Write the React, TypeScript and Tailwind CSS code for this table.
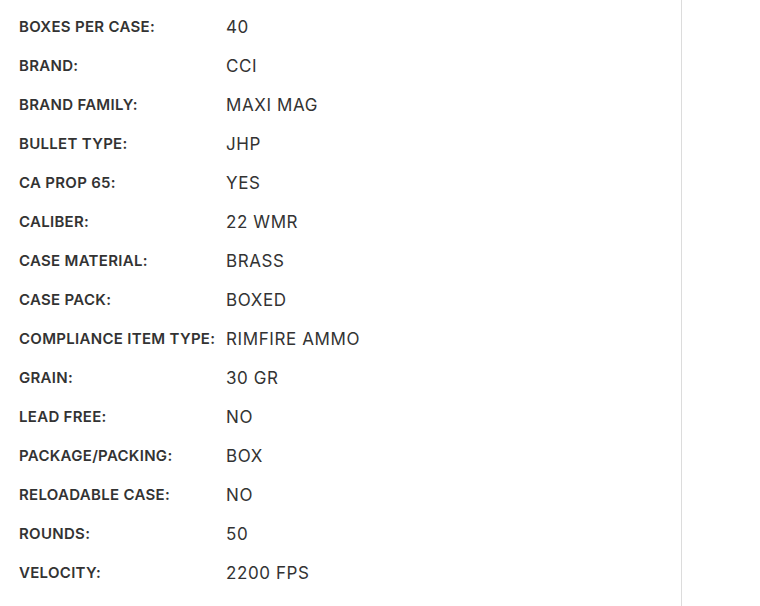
const rows: [string, string][] = [
  ["BOXES PER CASE:", "40"],
  ["BRAND:", "CCI"],
  ["BRAND FAMILY:", "MAXI MAG"],
  ["BULLET TYPE:", "JHP"],
  ["CA PROP 65:", "YES"],
  ["CALIBER:", "22 WMR"],
  ["CASE MATERIAL:", "BRASS"],
  ["CASE PACK:", "BOXED"],
  ["COMPLIANCE ITEM TYPE:", "RIMFIRE AMMO"],
  ["GRAIN:", "30 GR"],
  ["LEAD FREE:", "NO"],
  ["PACKAGE/PACKING:", "BOX"],
  ["RELOADABLE CASE:", "NO"],
  ["ROUNDS:", "50"],
  ["VELOCITY:", "2200 FPS"],
];

export default function App() {
  return (
    <div className="flex h-[606px] w-[760px] bg-white" style={{ fontFamily: "Inter, 'Noto Sans', sans-serif" }}>
      <div className="w-[682px] shrink-0 border-r border-[#dcdcdc] pl-[19px] pt-[8px]">
        {rows.map(([k, v]) => (
          <div key={k} className="flex h-[39px] items-center">
            <div className="w-[207px] shrink-0 text-[15px] font-semibold tracking-[0.3px] text-[#333333]">{k}</div>
            <div className="text-[17px] tracking-[0.6px] text-[#333333]">{v}</div>
          </div>
        ))}
      </div>
      <div className="flex-1" />
    </div>
  );
}
